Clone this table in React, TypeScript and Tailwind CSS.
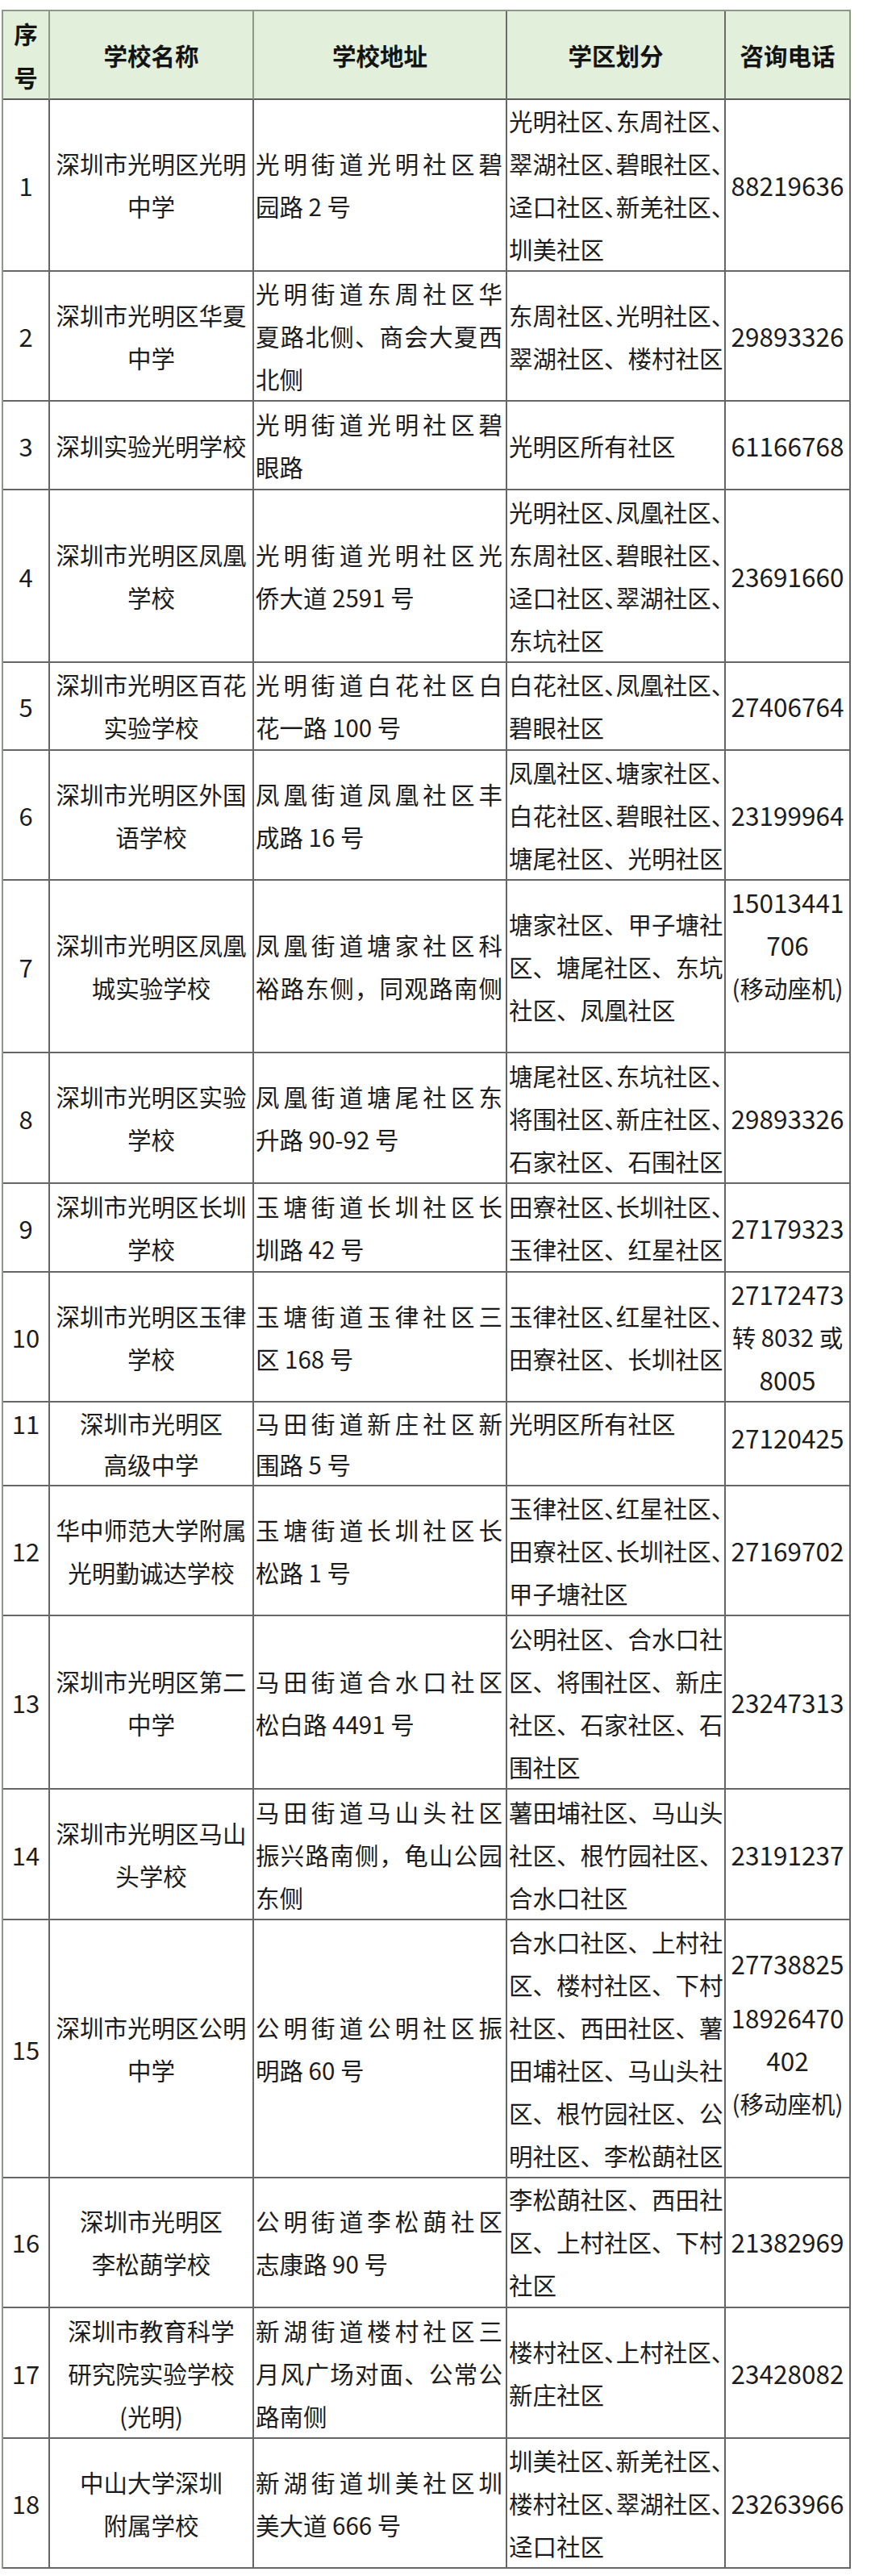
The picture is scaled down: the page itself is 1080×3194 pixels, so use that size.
import React from "react";

type Row = {
  h: number;
  seq: string;
  name: string[];
  addr: string[];
  dist: string[];
  phone: string[];
  seqTop?: boolean;
  distTop?: boolean;
  phoneShift?: boolean;
  lead?: string;
  phoneGap?: boolean;
};

const rows: Row[] = [
  { h: 214, seq: "1", name: ["深圳市光明区光明", "中学"], addr: ["光明街道光明社区碧", "园路 2 号"], dist: ["光明社区、东周社区、", "翠湖社区、碧眼社区、", "迳口社区、新羌社区、", "圳美社区"], phone: ["88219636"] },
  { h: 161, seq: "2", name: ["深圳市光明区华夏", "中学"], addr: ["光明街道东周社区华", "夏路北侧、商会大夏西", "北侧"], dist: ["东周社区、光明社区、", "翠湖社区、楼村社区"], phone: ["29893326"] },
  { h: 110, seq: "3", name: ["深圳实验光明学校"], addr: ["光明街道光明社区碧", "眼路"], dist: ["光明区所有社区"], phone: ["61166768"] },
  { h: 213, seq: "4", name: ["深圳市光明区凤凰", "学校"], addr: ["光明街道光明社区光", "侨大道 2591 号"], dist: ["光明社区、凤凰社区、", "东周社区、碧眼社区、", "迳口社区、翠湖社区、", "东坑社区"], phone: ["23691660"] },
  { h: 110, seq: "5", name: ["深圳市光明区百花", "实验学校"], addr: ["光明街道白花社区白", "花一路 100 号"], dist: ["白花社区、凤凰社区、", "碧眼社区"], phone: ["27406764"] },
  { h: 161, seq: "6", name: ["深圳市光明区外国", "语学校"], addr: ["凤凰街道凤凰社区丰", "成路 16 号"], dist: ["凤凰社区、塘家社区、", "白花社区、碧眼社区、", "塘尾社区、光明社区"], phone: ["23199964"] },
  { h: 214, seq: "7", name: ["深圳市光明区凤凰", "城实验学校"], addr: ["凤凰街道塘家社区科", "裕路东侧，同观路南侧"], dist: ["塘家社区、甲子塘社", "区、塘尾社区、东坑", "社区、凤凰社区"], phone: ["15013441", "706", "(移动座机)", "\u00a0"] },
  { h: 162, seq: "8", name: ["深圳市光明区实验", "学校"], addr: ["凤凰街道塘尾社区东", "升路 90-92 号"], dist: ["塘尾社区、东坑社区、", "将围社区、新庄社区、", "石家社区、石围社区"], phone: ["29893326"] },
  { h: 110, seq: "9", name: ["深圳市光明区长圳", "学校"], addr: ["玉塘街道长圳社区长", "圳路 42 号"], dist: ["田寮社区、长圳社区、", "玉律社区、红星社区"], phone: ["27179323"] },
  { h: 161, seq: "10", name: ["深圳市光明区玉律", "学校"], addr: ["玉塘街道玉律社区三", "区 168 号"], dist: ["玉律社区、红星社区、", "田寮社区、长圳社区"], phone: ["27172473", "转 8032 或", "8005"] },
  { h: 104, seq: "11", name: ["深圳市光明区", "高级中学"], addr: ["马田街道新庄社区新", "围路 5 号"], dist: ["光明区所有社区"], phone: ["27120425"], seqTop: true, distTop: true, phoneShift: true, lead: "small" },
  { h: 161, seq: "12", name: ["华中师范大学附属", "光明勤诚达学校"], addr: ["玉塘街道长圳社区长", "松路 1 号"], dist: ["玉律社区、红星社区、", "田寮社区、长圳社区、", "甲子塘社区"], phone: ["27169702"] },
  { h: 215, seq: "13", name: ["深圳市光明区第二", "中学"], addr: ["马田街道合水口社区", "松白路 4491 号"], dist: ["公明社区、合水口社", "区、将围社区、新庄", "社区、石家社区、石", "围社区"], phone: ["23247313"] },
  { h: 162, seq: "14", name: ["深圳市光明区马山", "头学校"], addr: ["马田街道马山头社区", "振兴路南侧，龟山公园", "东侧"], dist: ["薯田埔社区、马山头", "社区、根竹园社区、", "合水口社区"], phone: ["23191237"] },
  { h: 318, seq: "15", name: ["深圳市光明区公明", "中学"], addr: ["公明街道公明社区振", "明路 60 号"], dist: ["合水口社区、上村社", "区、楼村社区、下村", "社区、西田社区、薯", "田埔社区、马山头社", "区、根竹园社区、公", "明社区、李松蓢社区"], phone: ["27738825", "18926470", "402", "(移动座机)"], phoneGap: true },
  { h: 163, seq: "16", name: ["深圳市光明区", "李松蓢学校"], addr: ["公明街道李松蓢社区", "志康路 90 号"], dist: ["李松蓢社区、西田社", "区、上村社区、下村", "社区"], phone: ["21382969"] },
  { h: 162, seq: "17", name: ["深圳市教育科学", "研究院实验学校", "(光明)"], addr: ["新湖街道楼村社区三", "月风广场对面、公常公", "路南侧"], dist: ["楼村社区、上村社区、", "新庄社区"], phone: ["23428082"] },
  { h: 161, seq: "18", name: ["中山大学深圳", "附属学校"], addr: ["新湖街道圳美社区圳", "美大道 666 号"], dist: ["圳美社区、新羌社区、", "楼村社区、翠湖社区、", "迳口社区"], phone: ["23263966"] },
];

function JLine({ text, halt }: { text: string; halt?: boolean }) {
  const justify = text.replace(/\s/g, "").length >= 9;
  return (
    <div
      className={
        "whitespace-nowrap " +
        (justify ? "text-justify [text-align-last:justify] " : "text-left ") +
        (halt && text.length >= 10 ? "[font-feature-settings:'halt']" : "")
      }
    >
      {text}
    </div>
  );
}

export default function App() {
  return (
    <div className="min-h-[3194px] w-[1080px] bg-white pt-[12px] pl-[2px] font-['Noto_Sans_CJK_SC','Noto_Sans',sans-serif] text-[29.5px] text-[#1c1c1c]">
      <div className="w-[1053px] border-t-2 border-l-2 border-[#8d9889]">
        {/* header */}
        <div className="grid h-[109px] grid-cols-[58px_253px_314px_271px_155px] bg-[#e2efda] font-bold leading-[54px] text-[#141414]">
          <div className="flex flex-col items-center justify-center border-r-2 border-b-2 border-r-[#8d9889] border-b-[#5c5c5c]">
            <div>序</div>
            <div>号</div>
          </div>
          <div className="flex items-center justify-center border-r-2 border-b-2 border-r-[#8d9889] border-b-[#5c5c5c]">学校名称</div>
          <div className="flex items-center justify-center border-r-2 border-b-2 border-r-[#6a6a6a] border-b-[#5c5c5c]">学校地址</div>
          <div className="flex items-center justify-center border-r-2 border-b-2 border-r-[#6a6a6a] border-b-[#5c5c5c]">学区划分</div>
          <div className="flex items-center justify-center border-r-2 border-b-2 border-r-[#8d9889] border-b-[#5c5c5c]">咨询电话</div>
        </div>
        {rows.map((r) => (
          <div
            key={r.seq}
            className={
              "grid grid-cols-[58px_253px_314px_271px_155px] " +
              (r.lead === "small" ? "leading-[51px]" : "leading-[53px]")
            }
            style={{ height: r.h }}
          >
            <div
              className={
                "flex flex-col items-center border-r-2 border-b-2 border-[#666666] text-[31px] " +
                (r.seqTop ? "justify-start" : "justify-center")
              }
            >
              {r.seq}
            </div>
            <div className="flex flex-col items-center justify-center border-r-2 border-b-2 border-[#666666] text-center">
              {r.name.map((l, i) => (
                <div key={i} className="whitespace-nowrap">
                  {l}
                </div>
              ))}
            </div>
            <div className="flex flex-col justify-center border-r-2 border-b-2 border-[#666666] pl-[2px] pr-[4px]">
              {r.addr.map((l, i) => (
                <JLine key={i} text={l} />
              ))}
            </div>
            <div
              className={
                "flex flex-col border-r-2 border-b-2 border-[#666666] pl-[2px] pr-[2px] " +
                (r.distTop ? "justify-start" : "justify-center")
              }
            >
              {r.dist.map((l, i) => (
                <JLine key={i} text={l} halt />
              ))}
            </div>
            <div
              className={
                "flex flex-col items-center justify-center border-r-2 border-b-2 border-[#666666] text-center " +
                (r.phoneShift ? "pb-[16px]" : "")
              }
            >
              {r.phone.map((l, i) => (
                <div
                  key={i}
                  className={
                    "whitespace-nowrap " +
                    (/^[0-9]+$/.test(l) ? "text-[31.5px] " : "") +
                    (r.phoneGap && i === 1 ? "mt-[14px]" : "")
                  }
                >
                  {l}
                </div>
              ))}
              {r.phoneGap ? <div className="h-[39px]" /> : null}
            </div>
          </div>
        ))}
      </div>
    </div>
  );
}
